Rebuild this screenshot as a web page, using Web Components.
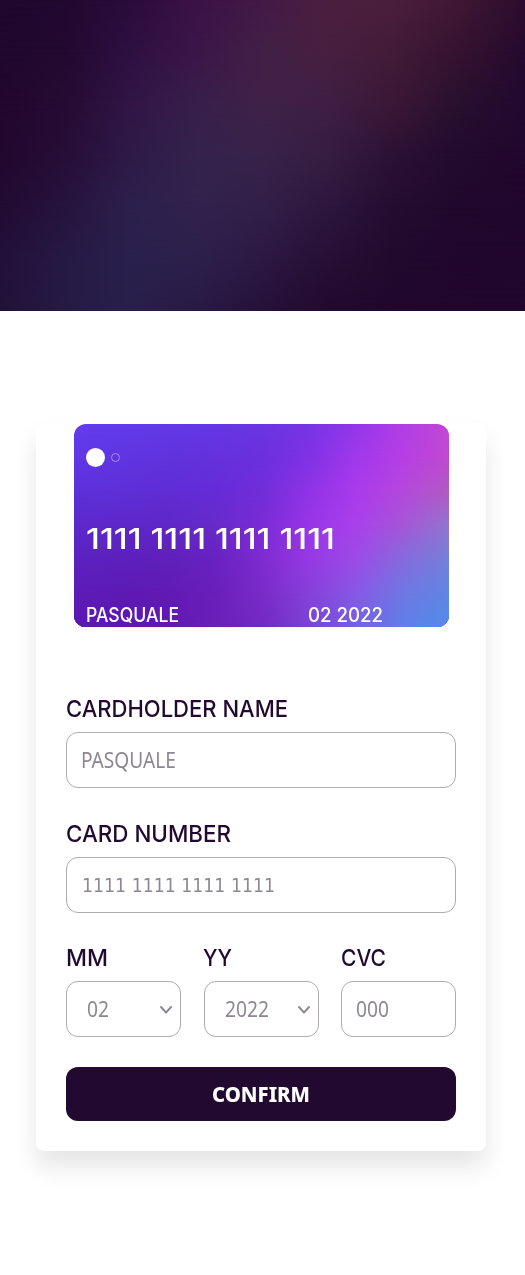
<!DOCTYPE html>
<html lang="en">
<head>
<meta charset="utf-8">
<title>Card details</title>
<style>
body{margin:0;background:#fff;color:#21092f;font-family:Inter,"Liberation Sans",sans-serif}
</style>
</head>
<body>
<card-page></card-page>
<script>
const define = (name, html, setup) => customElements.define(name, class extends HTMLElement {
  connectedCallback() {
    if (this.shadowRoot) return;
    this.attachShadow({mode: 'open'}).innerHTML = html;
    if (setup) setup(this, this.shadowRoot);
  }
});

/* Smooth colour field: each row is a horizontal gradient that fades into the one above. */
define('colour-mesh', `<style>:host{display:grid;width:100%;height:100%}div{grid-area:1/1}</style>`, (el, root) => {
  const rows = el.getAttribute('colours').trim().split('|');
  rows.forEach((row, i) => {
    const d = document.createElement('div');
    d.style.background = `linear-gradient(90deg,${row.trim().split(/\s+/).map(c => '#' + c).join(',')})`;
    if (i) {
      const n = rows.length - 1;
      d.style.maskImage = `linear-gradient(180deg,transparent ${(i - 1) / n * 100}%,#000 ${i / n * 100}%)`;
    }
    root.append(d);
  });
});

/* One line of text set to a given width. */
define('fit-text', `<style>:host{display:block;white-space:nowrap;height:1.2em;line-height:1.2}span{display:inline-block;transform-origin:0 50%}</style><span><slot></slot></span>`, (el, root) => {
  const s = root.querySelector('span'), w = +el.getAttribute('width');
  el.style.width = w + 'px';
  s.style.transform = `scaleX(${w / s.getBoundingClientRect().width})`;
});

define('page-banner', `<style>:host{display:block;height:311px}</style>
<colour-mesh colours="
1f072d 220830 2b0c3b 3c1246 431946 4b1f3f 4a1e3c 401834 2c0c2e|
20072d 230930 2e1042 3b1648 422046 481f40 421c38 351230 250a2e|
22062d 260b33 311546 381f4b 3f2148 3e1f43 3b1736 28102e 220830|
22072e 270e38 2e1a48 34234c 38224a 361d41 2b1133 220a2e 22062d|
220b33 26143e 2c204d 31224d 321f48 2d163e 240c31 21072d 21062d|
23103a 251a44 2a204d 2c204b 2c1843 270f35 21092e 21062d 21062d|
221239 251b45 281f4b 281a45 26113a 22092f 21072d 21062d 21072d"></colour-mesh>`);

define('card-preview', `<style>
:host{display:grid;width:375px;height:203px;border-radius:12px;overflow:hidden;color:#fff}
colour-mesh,.face{grid-area:1/1}
.face{display:flex;flex-direction:column;padding:24px 12px 0;isolation:isolate}
.marks{display:flex;align-items:center;gap:6px;height:19px}
.dot{width:19px;height:19px;border-radius:50%;background:#fff}
.ring{width:9px;height:9px;box-sizing:border-box;border:1px solid #b18cf2;border-radius:50%}
.number{font-size:29px;font-weight:500;height:35px;margin:55px 0 0 -.5px}
.foot{display:flex;font-size:19.5px;font-weight:550;margin-top:47px}
.date{margin-left:129px}
</style>
<colour-mesh colours="
633ced 623bea 6339e7 6537e5 6b35e3 7634e4 9336e9 b33de6 c348d4|
6037e6 6035e2 6033dd 6431dc 6b30dd 7f32e4 a138ec b53fe5 c04acf|
5d30da 5e2fd7 5f2dd3 652cd5 712dd9 9033e6 aa3aec b448dc b15ac4|
5c29cc 5d28c9 5f27c7 672ac9 7a2bd5 9835e7 a940ec a456d8 9175ce|
5c22c1 5c20bd 6020ba 6822c0 7e2bcf 9539e4 9c4be6 866ade 7580da|
5d1cb7 5d1ab4 611ab4 6a1fbb 792bc8 8640d9 8758e6 6f77e4 5f86e3|
5d18b3 5e17b0 6118b0 6a1fb8 7329c4 7943d4 7560e3 5f7ee8 528de9"></colour-mesh>
<div class="face">
<div class="marks"><div class="dot"></div><div class="ring"></div></div>
<fit-text class="number" width="249">1111 1111 1111 1111</fit-text>
<div class="foot"><fit-text width="93">PASQUALE</fit-text><fit-text class="date" width="75">02 2022</fit-text></div>
</div>`);

define('form-field', `<style>
:host{display:block}
.label{font-size:23.5px;font-weight:550;height:29px;margin:0 0 8px -.5px}
.box{display:flex;align-items:center;height:56px;box-sizing:border-box;border:1px solid #adabb0;border-radius:12px;padding:1px 14px 0 14px;color:#8f8694;font:21px "Noto Sans",sans-serif}
:host([select]) .box{padding:1px 7px 0 20px}
:host([numeric]) .box{padding:0 14px 0 15px;font:20px "DejaVu Sans",sans-serif}
svg{display:none;margin-left:auto}
:host([select]) svg{display:block}
</style>
<div class="label"></div><div class="box"><svg width="14" height="10" viewBox="0 0 14 10" fill="none" stroke="#8f8694" stroke-width="2" stroke-linecap="round" stroke-linejoin="round"><path d="M2 2 7 7.6 12 2"/></svg></div>`, (el, root) => {
  const fit = (text, width) => {
    const t = document.createElement('fit-text');
    t.setAttribute('width', width);
    t.textContent = text;
    return t;
  };
  root.querySelector('.label').append(fit(el.getAttribute('label'), el.getAttribute('label-width')));
  root.querySelector('.box').prepend(fit(el.getAttribute('value'), el.getAttribute('value-width')));
});

define('confirm-button', `<style>
:host{display:block}
button{display:flex;align-items:center;justify-content:center;width:100%;height:54px;border:0;border-radius:12px;background:#21092f;color:#fff;font:800 21px "Noto Sans",sans-serif;padding:2px 1px 0 0}
</style><button><fit-text width="98"><slot></slot></fit-text></button>`);

define('card-page', `<style>
:host{display:block;height:1275px;overflow:hidden}
main{width:450px;height:728px;box-sizing:border-box;margin:112px 0 0 36px;padding:1px 30px 0;border-radius:8px;background:#fff;box-shadow:0 16px 25px rgba(0,0,0,.1)}
card-preview{margin-left:8px}
form{margin-top:68px}
form-field{margin-bottom:32px}
.row{display:grid;grid-template-columns:115px 115px 115px;justify-content:space-between;margin-top:-1px}
.row form-field{margin-bottom:30px}
</style>
<page-banner></page-banner>
<main>
<card-preview></card-preview>
<form>
<form-field label="CARDHOLDER NAME" label-width="222" value="PASQUALE" value-width="95"></form-field>
<form-field numeric label="CARD NUMBER" label-width="165" value="1111 1111 1111 1111" value-width="193"></form-field>
<div class="row">
<form-field select label="MM" label-width="42" value="02" value-width="22"></form-field>
<form-field select label="YY" label-width="29" value="2022" value-width="44"></form-field>
<form-field label="CVC" label-width="45" value="000" value-width="33"></form-field>
</div>
<confirm-button>CONFIRM</confirm-button>
</form>
</main>`);
</script>
</body>
</html>
